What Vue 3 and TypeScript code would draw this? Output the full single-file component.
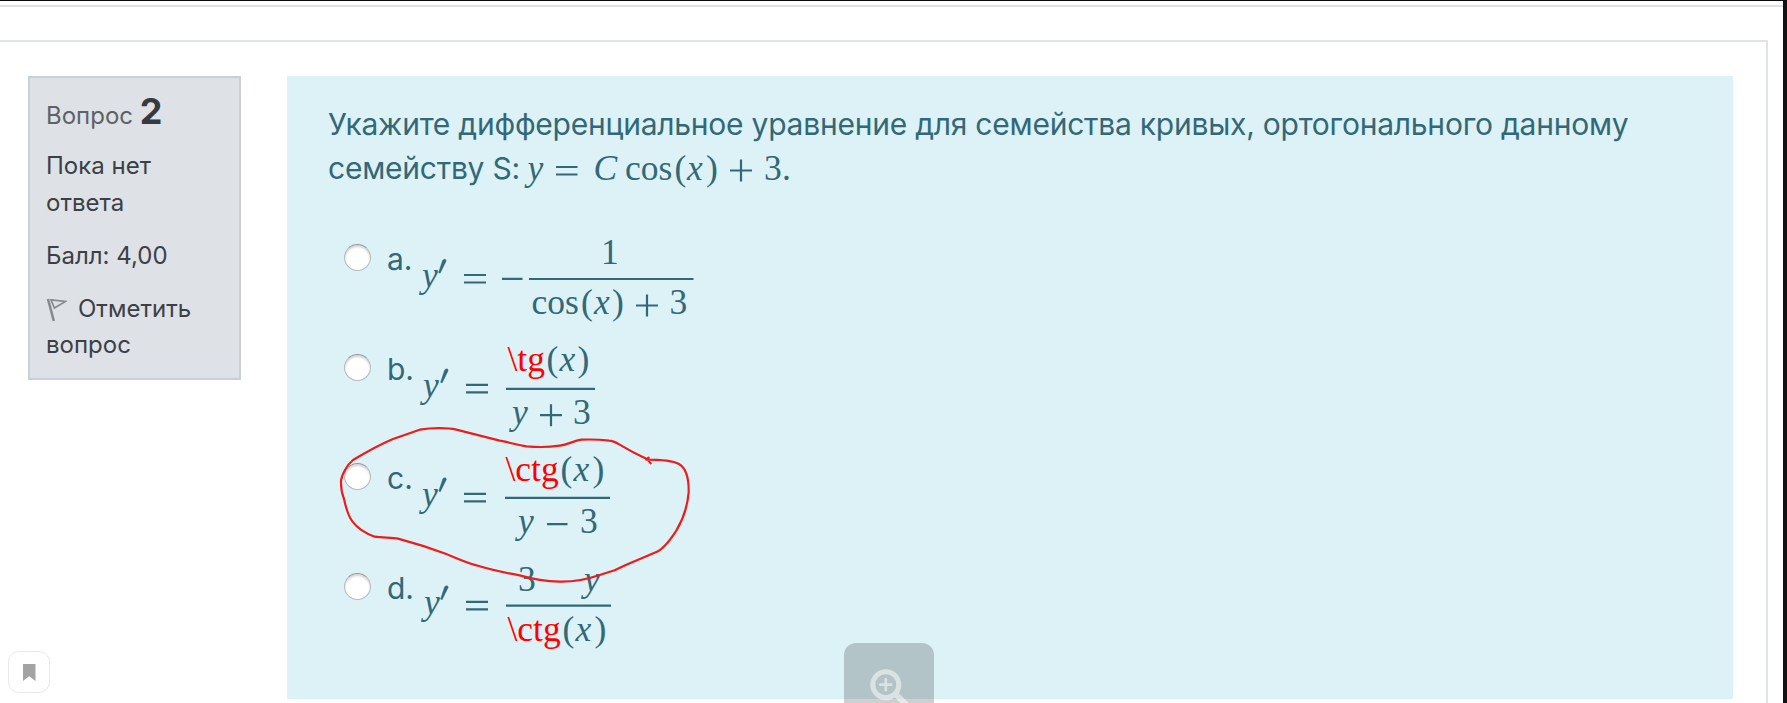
<script setup lang="ts">
type Kind = 'roman' | 'italic' | 'error'
interface Run { text: string; x: number; y: number; kind: Kind }
interface Option { id: string; runs: Run[]; signs: string; bar: string; prime: string }

const r = (text: string, x: number, y: number, kind: Kind = 'roman'): Run => ({ text, x, y, kind })

// Run coordinates are relative to the equation box of each answer row.
const options: Option[] = [
  {
    id: 'a',
    runs: [
      r('y', 2, 67, 'italic'),
      r('1', 181, 43.5),
      r('cos', 111.5, 94.3), r('(', 161, 94.3), r('x', 174, 94.3, 'italic'), r(')', 192, 94.3), r('3', 249.5, 94.3),
    ],
    signs: 'M44 55h22M44 62.5h22M82 58.8h20.5M216 85.5h22M227 74.5v22',
    bar: 'M109 59H273.5',
    prime: 'M22.7 40.2q3.2-2.4 3.4.8l-6 12.2-1.5-.6z',
  },
  {
    id: 'b',
    runs: [
      r('y', 3, 67, 'italic'),
      r('\\tg', 87.5, 41.4, 'error'), r('(', 126.5, 41.4), r('x', 139.5, 41.4, 'italic'), r(')', 157.5, 41.4),
      r('y', 92, 94.4, 'italic'), r('3', 153, 94.4),
    ],
    signs: 'M46 54.9h22M46 62.4h22M120 85.2h22M131 74.2v22',
    bar: 'M86 58.9H175',
    prime: 'M24.7 39.9q3.2-2.4 3.4.8l-6 12.2-1.5-.6z',
  },
  {
    id: 'c',
    runs: [
      r('y', 2, 67, 'italic'),
      r('\\ctg', 85.5, 41.5, 'error'), r('(', 140.5, 41.5), r('x', 153.5, 41.5, 'italic'), r(')', 172.5, 41.5),
      r('y', 98, 94.2, 'italic'), r('3', 160, 94.2),
    ],
    signs: 'M44 54.8h22M44 62.3h22M127 85.2h20.5',
    bar: 'M85 58.8H190',
    prime: 'M22.9 39.7q3.2-2.4 3.4.8l-6 12.2-1.5-.6z',
  },
  {
    id: 'd',
    runs: [
      r('y', 4, 65, 'italic'),
      r('3', 98, 41.9), r('y', 164, 41.9, 'italic'),
      r('\\ctg', 87.5, 91.9, 'error'), r('(', 142.5, 91.9), r('x', 155.5, 91.9, 'italic'), r(')', 174.5, 91.9),
    ],
    signs: 'M46 52.8h22M46 60.4h22',
    bar: 'M86 56.7H191',
    prime: 'M24.7 37.7q3.2-2.4 3.4.8l-6 12.2-1.5-.6z',
  },
]
</script>

<template>
  <main class="screen">
    <div class="topline"></div>
    <section class="card">
      <aside class="info">
        <h3>Вопрос <b>2</b></h3>
        <p>Пока нет ответа</p>
        <p>Балл: 4,00</p>
        <p class="flag">
          <svg width="21" height="24" viewBox="0 0 21 24" fill="none" stroke="#888b8d">
            <path d="M2 1l5.8 22" stroke-width="2.6" />
            <path d="M5 1.8l14.5 1.6L8.4 10z" stroke-width="1.7" />
          </svg>Отметить вопрос
        </p>
      </aside>
      <article class="question">
        <div class="prompt">
          <div class="line">Укажите дифференциальное уравнение для семейства кривых, ортогонального данному</div>
          <div class="line second">
            <span>семейству S:</span>
            <svg class="math" width="280" height="48" viewBox="0 0 280 48">
              <text class="italic" x="3.5" y="34.5">y</text>
              <text class="italic" x="69.5" y="34.5">C</text>
              <text x="101" y="34.5">cos</text>
              <text x="150.5" y="34.5">(</text>
              <text class="italic" x="163" y="34.5">x</text>
              <text x="182" y="34.5">)</text>
              <text x="240" y="34.5">3</text>
              <text x="258" y="34.5">.</text>
              <path d="M32 22h21.5M32 29.5h21.5M206 25.5h22M217 14.5v22" />
            </svg>
          </div>
        </div>
        <div class="answers">
          <div v-for="o in options" :key="o.id" class="answer">
            <span class="radio"></span>
            <span class="label">{{ o.id }}.</span>
            <svg class="math" width="300" height="109" viewBox="0 0 300 109">
              <text v-for="(t, i) in o.runs" :key="i" :x="t.x" :y="t.y" :class="t.kind">{{ t.text }}</text>
              <path :d="o.signs" />
              <path :d="o.bar" />
              <path class="prime" :d="o.prime" />
            </svg>
          </div>
        </div>
      </article>
    </section>

    <svg class="ink" width="360" height="170" viewBox="0 0 1080 510">
      <path d="M923 118L913 106Q866 84 830 62Q810 50 798 50Q760 45 715 47C690 51 675 62 650 65Q605 72 550 67C510 60 490 53 470 50L340 17C315 11 265 11 230 17L150 45C110 62 60 90 30 108C12 122 -4 153 -6 170Q-7 200 3 225C10 257 17 278 28 292C45 315 70 329 95 338C120 342 145 340 165 344Q240 364 310 390C350 407 370 416 400 424Q450 440 530 454Q590 471 650 473Q710 474 770 453L815 439L850 422L940 384Q965 374 1000 320Q1032 266 1037 205C1038 155 1025 130 1008 120C985 108 950 107 910 107L917 101" />
    </svg>

    <div class="bookmark">
      <svg width="13" height="17" viewBox="0 0 13 17"><path d="M0 0h12.5v17L6.2 12.3 0 17z" fill="#a3a3a3" /></svg>
    </div>
    <div class="zoom">
      <svg width="90" height="60" viewBox="0 0 90 60" fill="none" stroke="#fff">
        <g opacity=".52">
          <circle cx="41.8" cy="41.7" r="13" stroke-width="5" />
          <path d="M36.3 41.7h11M41.8 36.2v11" stroke-width="2.7" stroke-linecap="round" />
          <path d="M51.5 51L63 62.5" stroke-width="6" />
        </g>
      </svg>
    </div>
  </main>
</template>

<style>
html, body { margin: 0; overflow: hidden; background: #fff; }
</style>

<style scoped>
.screen {
  position: relative;
  box-sizing: border-box;
  width: 1787px;
  height: 703px;
  overflow: hidden;
  border-top: 1px solid #0b0b0c;
  border-right: 4px solid #111113;
  font-family: Inter, "Noto Sans", sans-serif;
  background: #fff;
}
.topline { height: 2px; margin-top: 4px; background: #e0e0e0; }
.card {
  display: flex;
  align-items: flex-start;
  box-sizing: border-box;
  width: 1768px;
  height: 680px;
  margin-top: 33px;
  padding: 34px 0 0 28px;
  border-top: 2px solid #e0e3e7;
  border-right: 2px solid #e0e3e7;
}
.info {
  box-sizing: border-box;
  width: 213px;
  height: 304px;
  margin-right: 46px;
  padding: 11px 16px 0 16px;
  border: 2px solid #c9d0d8;
  background: #dee1e6;
  color: #3b4045;
  font-size: 24px;
  line-height: 36.6px;
}
.info h3 { margin: 0; font-size: 24px; font-weight: 400; line-height: 44px; color: #5d6266; white-space: nowrap; }
.info b { font-size: 36px; font-weight: 700; color: #343a3f; }
.info p { margin: 0 0 16.5px; }
.info h3 + p { margin-top: 10px; }
.flag svg { margin-right: 11px; vertical-align: -5px; }
.question { width: 1446px; height: 623px; background: #ddf2f7; color: #326878; }
.prompt { box-sizing: border-box; height: 155px; padding: 25px 0 0 41px; }
.line { height: 44px; font-size: 30px; line-height: 47px; letter-spacing: -.236px; white-space: nowrap; }
.second { display: flex; }
.second .math { margin-left: 4px; letter-spacing: 0; }
.math {
  overflow: visible;
  fill: #326878;
  font-family: "Liberation Serif", serif;
  font-size: 35.5px;
}
.math path { fill: none; stroke: #326878; stroke-width: 2.2; }
.math path.prime { fill: #326878; stroke-width: .5; }
.italic { font-style: italic; }
.error { fill: #f00; }
.answer { display: flex; height: 109.6px; padding-left: 57px; }
.radio {
  box-sizing: border-box;
  flex: none;
  width: 27px;
  height: 27px;
  margin-top: 13px;
  border: 1px solid #b3bbbe;
  border-top-color: #929a9e;
  border-radius: 50%;
  background: #fff;
  box-shadow: inset 0 2px 2px #d5d5d5;
}
.label { width: 33px; margin-left: 16px; margin-top: 10px; font-size: 30px; line-height: 36px; }
.answer .math { flex: none; margin-top: -11px; }
.ink { position: absolute; left: 343px; top: 423px; overflow: visible; }
.ink path { fill: none; stroke: #ea1c1c; stroke-width: 6.5; stroke-linecap: round; stroke-linejoin: round; }
.bookmark {
  position: absolute;
  left: 8px;
  top: 650px;
  display: flex;
  align-items: center;
  justify-content: center;
  box-sizing: border-box;
  width: 42px;
  height: 42px;
  border: 1px solid #e9e9e9;
  border-radius: 11px;
  background: #fff;
}
.zoom { position: absolute; left: 844px; top: 642px; width: 90px; height: 80px; border-radius: 12px; background: rgba(0, 0, 0, .19); }
</style>
